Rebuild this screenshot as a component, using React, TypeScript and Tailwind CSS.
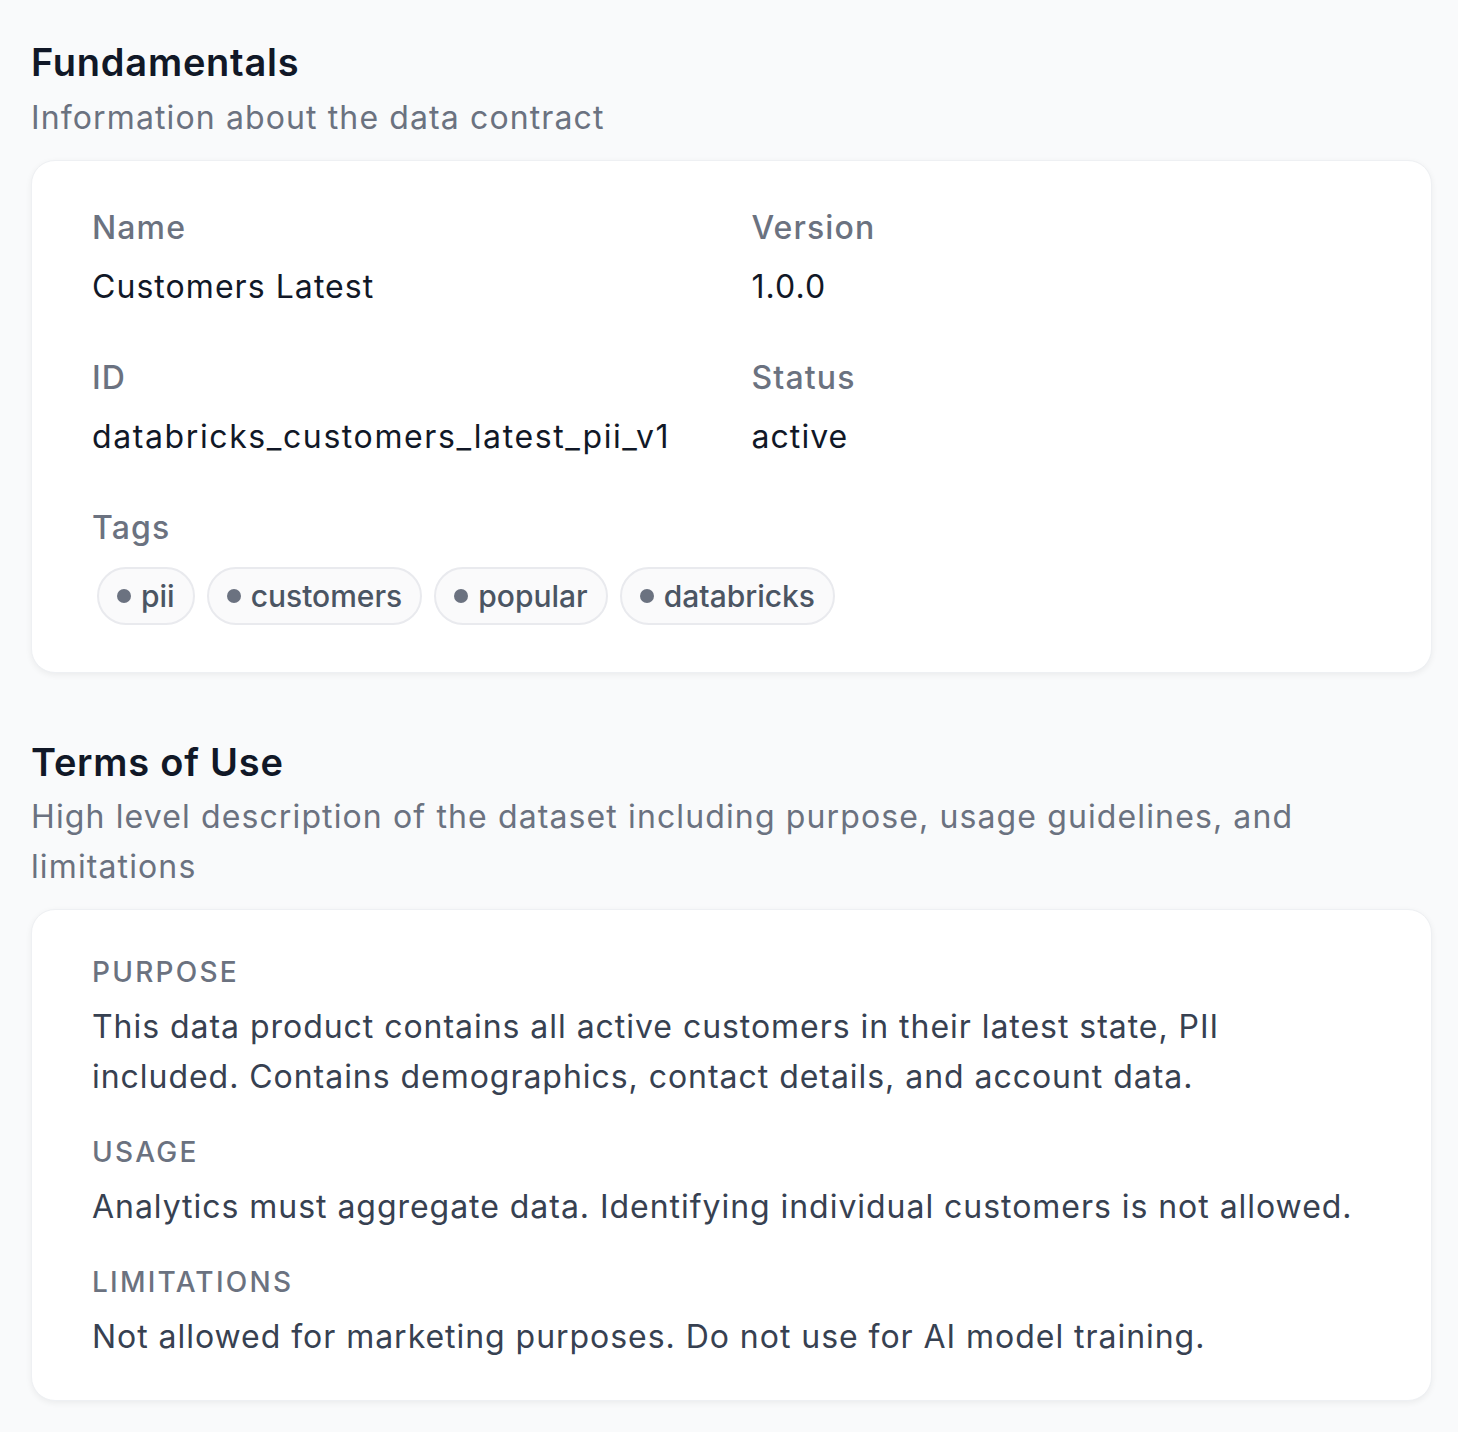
import React from "react";

const font = { fontFamily: "Inter, 'Noto Sans', sans-serif" };

function Field({ label, value, wide }: { label: string; value: string; wide?: boolean }) {
  return (
    <div className="flex flex-col">
      <div className="text-[32px] leading-[44px] font-medium tracking-[0.035em] text-[#6b7280]">{label}</div>
      <div
        className={
          wide
            ? "mt-[13px] text-[32px] leading-[48px] tracking-[0.05em] text-[#111827]"
            : "mt-[13px] text-[32px] leading-[48px] tracking-[0.033em] text-[#111827]"
        }
      >
        {value}
      </div>
    </div>
  );
}

function Tag({ name }: { name: string }) {
  return (
    <span className="inline-flex h-[58px] items-center gap-[10px] rounded-full border-2 border-[#e9eaee] bg-[#fafafb] px-[18px] text-[30px] font-medium text-[#4b5563]">
      <span className="h-[14px] w-[14px] rounded-full bg-[#6b7280]" />
      {name}
    </span>
  );
}

function TermBlock({ label, text, first }: { label: string; text: string; first?: boolean }) {
  return (
    <div className={first ? "" : "mt-[30px]"}>
      <div className="text-[28px] leading-[40px] font-medium uppercase tracking-[0.08em] text-[#6b7280]">{label}</div>
      <p className="mt-[10px] text-[32px] leading-[50px] tracking-[0.03em] text-[#374151]">{text}</p>
    </div>
  );
}

export default function App() {
  return (
    <div style={font} className="min-h-[1432px] w-full bg-[#f9fafb] pl-[31px] pr-[26px] pt-[34px]">
      <h2 className="text-[38px] leading-[56px] font-semibold tracking-[0.02em] text-[#111827]">Fundamentals</h2>
      <p className="mt-[3px] text-[32px] leading-[50px] tracking-[0.035em] text-[#6b7280]">Information about the data contract</p>
      <div className="mt-[17px] rounded-[24px] border border-[#eef0f3] bg-white px-[60px] pt-[45px] pb-[47px] shadow-[0_2px_6px_rgba(0,0,0,0.06)]">
        <div className="grid grid-cols-2 gap-x-[40px] gap-y-[45px]">
          <Field label="Name" value="Customers Latest" />
          <Field label="Version" value="1.0.0" />
          <Field label="ID" value="databricks_customers_latest_pii_v1" wide />
          <Field label="Status" value="active" />
        </div>
        <div className="mt-[45px] text-[32px] leading-[44px] font-medium tracking-[0.035em] text-[#6b7280]">Tags</div>
        <div className="mt-[17px] ml-[5px] flex flex-wrap gap-[12px]">
          <Tag name="pii" />
          <Tag name="customers" />
          <Tag name="popular" />
          <Tag name="databricks" />
        </div>
      </div>

      <h2 className="mt-[61px] text-[38px] leading-[56px] font-semibold tracking-[0.02em] text-[#111827]">Terms of Use</h2>
      <p className="mt-[2px] pr-[60px] text-[32px] leading-[50px] tracking-[0.035em] text-[#6b7280]">
        High level description of the dataset including purpose, usage guidelines, and limitations
      </p>
      <div className="mt-[17px] rounded-[24px] border border-[#eef0f3] bg-white px-[60px] pt-[42px] pb-[38px] shadow-[0_2px_6px_rgba(0,0,0,0.06)]">
        <div className="max-w-[1150px]">
          <TermBlock
            first
            label="Purpose"
            text="This data product contains all active customers in their latest state, PII included. Contains demographics, contact details, and account data."
          />
        </div>
        <TermBlock label="Usage" text="Analytics must aggregate data. Identifying individual customers is not allowed." />
        <TermBlock label="Limitations" text="Not allowed for marketing purposes. Do not use for AI model training." />
      </div>
    </div>
  );
}
